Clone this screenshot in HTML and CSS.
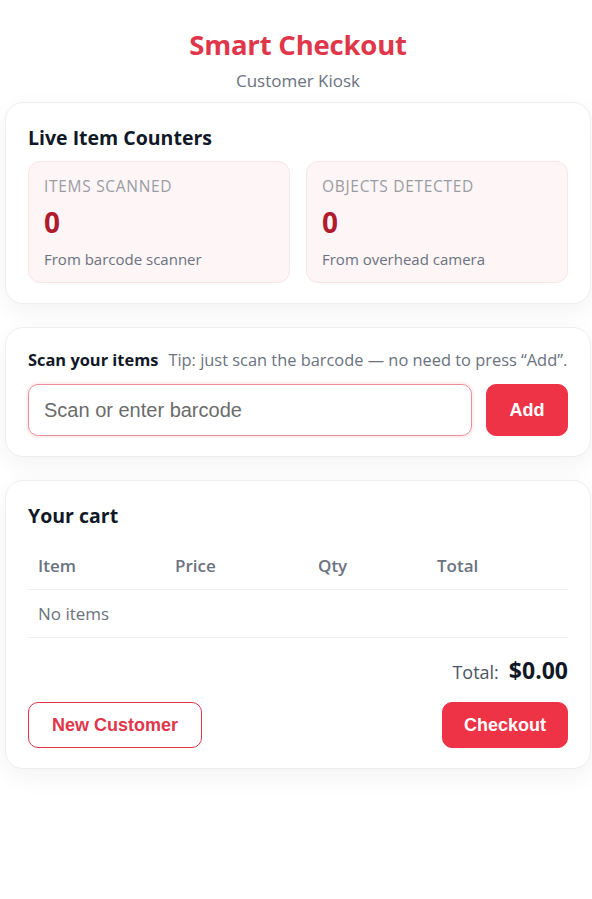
FILE: index.html
```html
<!DOCTYPE html>
<html>
<head>
<meta charset="utf-8">
<link rel="stylesheet" href="styles.css">
</head>
<body>
<div class="page">
  <header class="header">
    <h1 class="title">Smart Checkout</h1>
    <div class="subtitle">Customer Kiosk</div>
  </header>

  <section class="card">
    <h2 class="card-title">Live Item Counters</h2>
    <div class="counters">
      <div class="counter">
        <div class="counter-label">ITEMS SCANNED</div>
        <div class="counter-value">0</div>
        <div class="counter-sub">From barcode scanner</div>
      </div>
      <div class="counter">
        <div class="counter-label">OBJECTS DETECTED</div>
        <div class="counter-value">0</div>
        <div class="counter-sub">From overhead camera</div>
      </div>
    </div>
  </section>

  <section class="card card-scan">
    <div class="scan-head">
      <span class="scan-title">Scan your items</span>
      <span class="scan-tip">Tip: just scan the barcode — no need to press “Add”.</span>
    </div>
    <div class="scan-row">
      <input class="scan-input" type="text" placeholder="Scan or enter barcode">
      <button class="btn btn-primary btn-add">Add</button>
    </div>
  </section>

  <section class="card">
    <h2 class="card-title">Your cart</h2>
    <table class="cart">
      <thead>
        <tr><th class="c1">Item</th><th class="c2">Price</th><th class="c3">Qty</th><th class="c4">Total</th></tr>
      </thead>
      <tbody>
        <tr><td colspan="4" class="empty">No items</td></tr>
      </tbody>
    </table>
    <div class="total-row">
      <span class="total-label">Total:</span>
      <span class="total-value">$0.00</span>
    </div>
    <div class="actions">
      <button class="btn btn-outline">New Customer</button>
      <button class="btn btn-primary">Checkout</button>
    </div>
  </section>
</div>
</body>
</html>
```

FILE: styles.css
```css
* { box-sizing: border-box; }
html, body { margin: 0; padding: 0; background: #ffffff; }
body {
  font-family: "Open Sans", "Lato", sans-serif;
  color: #111827;
  width: 592px;
  overflow: hidden;
}
.page {
  padding: 27px 1px 60px 5px;
  display: flex;
  flex-direction: column;
  gap: 23px;
}
.header { text-align: center; margin-bottom: -14px; }
.title {
  margin: 0;
  font-size: 27.5px;
  font-weight: 700;
  color: #e0364a;
  line-height: 36px;
  letter-spacing: -0.2px;
}
.subtitle {
  margin-top: 6px;
  font-size: 17px;
  color: #6b7280;
  line-height: 24px;
}
.card {
  background: #fff;
  border: 1px solid #eeeef0;
  border-radius: 18px;
  box-shadow: 0 8px 24px rgba(0,0,0,0.05);
  padding: 21px 22px 20px 22px;
}
.card-title {
  margin: 0;
  font-size: 19.5px;
  font-weight: 700;
  line-height: 28px;
  color: #111827;
}
.counters {
  margin-top: 9px;
  display: grid;
  grid-template-columns: 1fr 1fr;
  gap: 16px;
}
.counter {
  background: #fdf5f6;
  border: 1px solid #fbe5e8;
  border-radius: 12px;
  padding: 13px 15px 12px 15px;
  height: 122px;
}
.counter-label {
  font-size: 15.5px;
  color: #9a9ca3;
  letter-spacing: 0.7px;
  line-height: 22px;
}
.counter-value {
  font-size: 28px;
  font-weight: 700;
  color: #b11b2e;
  line-height: 40px;
  margin-top: 5px;
}
.counter-sub {
  margin-top: 6px;
  font-size: 15px;
  color: #6b7280;
  line-height: 22px;
}
.card-scan { padding-top: 20px; padding-bottom: 20px; }
.scan-head {
  display: flex;
  align-items: baseline;
  gap: 10px;
  line-height: 24px;
  white-space: nowrap;
}
.scan-title { font-size: 16.4px; font-weight: 700; color: #111827; }
.scan-tip { font-size: 16.4px; color: #6b7280; }
.scan-row {
  margin-top: 12px;
  display: flex;
  gap: 14px;
}
.scan-input {
  flex: 1;
  height: 52px;
  border: 1.5px solid #ea8f9a;
  border-radius: 10px;
  padding: 0 15px;
  font-family: "Liberation Sans", Arial, sans-serif;
  font-size: 20px;
  color: #111827;
  outline: none;
  box-shadow: 0 0 0 2px rgba(239, 51, 71, 0.08);
}
.scan-input::placeholder { color: #6b6b6b; }
.btn {
  font-family: "Liberation Sans", Arial, sans-serif;
  font-weight: 700;
  font-size: 18px;
  border-radius: 10px;
  height: 46px;
  padding: 0 21px;
  cursor: pointer;
}
.btn-primary {
  background: #ef3347;
  border: 1px solid #ef3347;
  color: #fff;
}
.btn-add { height: 52px; width: 82px; padding: 0; }
.btn-outline {
  background: #fff;
  border: 1px solid #e0364a;
  color: #e0364a;
  padding: 0 23px;
}
.cart {
  margin-top: 13px;
  width: 100%;
  border-collapse: collapse;
  font-size: 17px;
}
.cart th {
  text-align: left;
  font-weight: 600;
  color: #6b7280;
  padding: 11px 10px 11px 10px;
  border-bottom: 1px solid #eeeff1;
  line-height: 24px;
}
.cart .c1 { width: 137px; }
.cart .c2 { width: 143px; }
.cart .c3 { width: 119px; }
.cart td.empty {
  padding: 12px 10px 11px 10px;
  color: #6b7280;
  border-bottom: 1px solid #eeeff1;
  line-height: 24px;
}
.total-row {
  margin-top: 16px;
  display: flex;
  justify-content: flex-end;
  align-items: baseline;
  gap: 10px;
}
.total-label { font-size: 18px; color: #4b5563; }
.total-value { font-size: 23px; font-weight: 700; color: #111827; }
.actions {
  margin-top: 16px;
  display: flex;
  justify-content: space-between;
}
```
